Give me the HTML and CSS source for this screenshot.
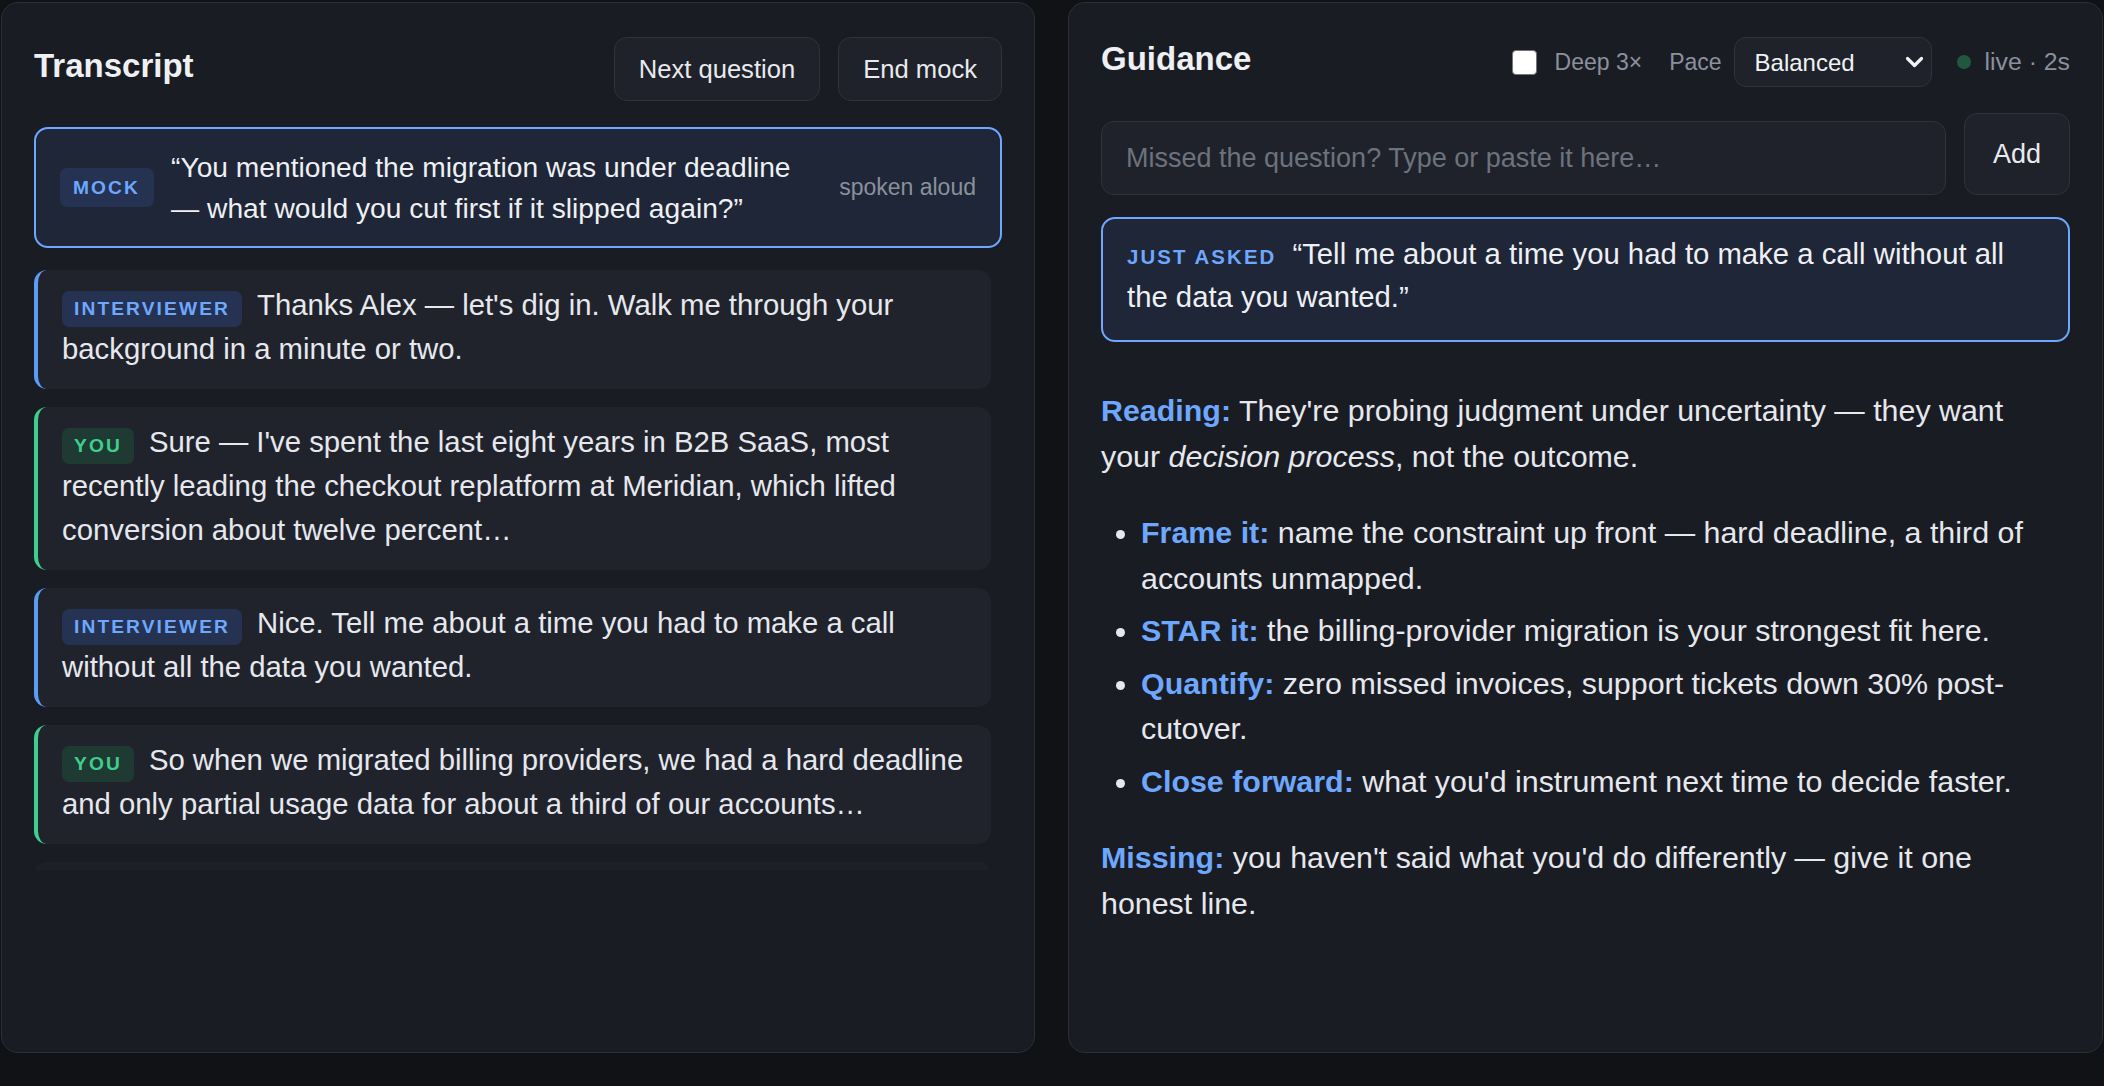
FILE: index.html
```html
<!DOCTYPE html>
<html lang="en">
<head>
    <meta charset="UTF-8">
    <meta name="viewport" content="width=device-width, initial-scale=1.0">
    <title>Mock Interview Copilot</title>
    <link rel="stylesheet" href="styles.css">
</head>
<body>
    <div class="app">
        <!-- Left: live transcript -->
        <section class="panel">
            <header class="panel-head">
                <h2>Transcript</h2>
                <div class="actions">
                    <button class="btn">Next question</button>
                    <button class="btn">End mock</button>
                </div>
            </header>

            <div class="mock-card">
                <span class="tag tag-mock">MOCK</span>
                <p class="mock-text">“You mentioned the migration was under deadline — what would you cut first if it slipped again?”</p>
                <span class="mock-note">spoken aloud</span>
            </div>

            <div class="turns">
                <div class="turn interviewer"><span class="tag">INTERVIEWER</span>Thanks Alex — let's dig in. Walk me through your background in a minute or two.</div>
                <div class="turn you"><span class="tag">YOU</span>Sure — I've spent the last eight years in B2B SaaS, most recently leading the checkout replatform at Meridian, which lifted conversion about twelve percent…</div>
                <div class="turn interviewer"><span class="tag">INTERVIEWER</span>Nice. Tell me about a time you had to make a call without all the data you wanted.</div>
                <div class="turn you"><span class="tag">YOU</span>So when we migrated billing providers, we had a hard deadline and only partial usage data for about a third of our accounts…</div>
                <div class="turn pending"></div>
            </div>
        </section>

        <!-- Right: guidance -->
        <section class="panel">
            <header class="panel-head">
                <h2>Guidance</h2>
                <div class="controls">
                    <label class="check"><input type="checkbox">Deep 3×</label>
                    <label class="pace">Pace
                        <span class="select-wrap">
                            <select>
                                <option>Balanced</option>
                                <option>Fast</option>
                                <option>Thorough</option>
                            </select>
                            <svg class="chevron" width="19" height="12" viewBox="0 0 19 12"><path d="M2.5 2.5 L9.5 9.5 L16.5 2.5" fill="none" stroke="#f0f2f5" stroke-width="3.2" stroke-linecap="round" stroke-linejoin="round"/></svg>
                        </span>
                    </label>
                    <span class="status"><span class="dot"></span>live · 2s</span>
                </div>
            </header>

            <div class="ask-row">
                <input type="text" placeholder="Missed the question? Type or paste it here…">
                <button class="btn btn-add">Add</button>
            </div>

            <div class="asked-card">
                <span class="asked-label">JUST ASKED</span>“Tell me about a time you had to make a call without all the data you wanted.”
            </div>

            <div class="advice">
                <p><strong>Reading:</strong> They're probing judgment under uncertainty — they want your <em>decision process</em>, not the outcome.</p>
                <ul>
                    <li><strong>Frame it:</strong> name the constraint up front — hard deadline, a third of accounts unmapped.</li>
                    <li><strong>STAR it:</strong> the billing-provider migration is your strongest fit here.</li>
                    <li><strong>Quantify:</strong> zero missed invoices, support tickets down 30% post-cutover.</li>
                    <li><strong>Close forward:</strong> what you'd instrument next time to decide faster.</li>
                </ul>
                <p><strong>Missing:</strong> you haven't said what you'd do differently — give it one honest line.</p>
            </div>
        </section>
    </div>
</body>
</html>
```

FILE: styles.css
```css
body {
    margin: 0;
    background-color: #101216;
    color: #e6e8ee;
    font-family: "Liberation Sans", Arial, sans-serif;
}

.app {
    display: grid;
    grid-template-columns: 1034px 1035px;
    gap: 33px;
    padding: 2px 0 0 1px;
}

.panel {
    box-sizing: border-box;
    height: 1051px;
    background-color: #1a1c23;
    border: 1px solid #2c2f38;
    border-radius: 17px;
    padding: 34px 32px 32px;
}

.panel-head {
    display: flex;
    align-items: center;
    justify-content: space-between;
    margin-bottom: 26px;
}

.panel-head h2 {
    margin: 0 0 6px;
    font-size: 33px;
    font-weight: 700;
    color: #eef0f4;
}

.actions {
    display: flex;
    gap: 18px;
}

.btn {
    font-family: inherit;
    font-size: 25.6px;
    color: #e8eaef;
    background-color: #1f222a;
    border: 1px solid #2e323c;
    border-radius: 13px;
    height: 64px;
    padding: 0 24px;
}

/* tags */
.tag {
    display: inline-block;
    font-size: 19.2px;
    line-height: 22px;
    font-weight: 700;
    letter-spacing: 2.1px;
    padding: 7px 12px;
    border-radius: 7px;
    margin-right: 15px;
    color: #6ea8fe;
    background-color: #253251;
}

.mock-card {
    display: flex;
    align-items: center;
    gap: 17px;
    background-color: #1e2637;
    border: 2px solid #6ea8fe;
    border-radius: 14px;
    padding: 18px 24px;
    margin-bottom: 22px;
}

.tag-mock {
    padding: 8.5px 14px 8.5px 13px;
    margin-right: 0;
    flex-shrink: 0;
}

.mock-text {
    margin: 0;
    width: 640px;
    font-size: 28.2px;
    line-height: 40.7px;
    color: #eef0f4;
}

.mock-note {
    margin-left: auto;
    font-size: 23px;
    color: #8a919d;
}

.turns {
    display: flex;
    flex-direction: column;
    gap: 18px;
    height: 600px;
    overflow: hidden;
    padding-right: 11px;
}

.turn {
    flex-shrink: 0;
    background-color: #20232b;
    border-left: 4px solid #5b9cf5;
    border-radius: 13px;
    padding: 13px 16px 18px 24px;
    font-size: 29.3px;
    line-height: 44px;
    color: #e6e8ee;
}

.turn.you {
    border-left-color: #3ecf8e;
}

.turn.you .tag {
    color: #3ecf8e;
    background-color: #1e3a33;
}

.turn.pending {
    min-height: 88px;
    border-left-color: transparent;
    background-color: #1d2028;
}

/* guidance controls */
.controls {
    display: flex;
    align-items: center;
    font-size: 23px;
    color: #8a919d;
}

.check {
    display: flex;
    align-items: center;
    gap: 18px;
    margin-right: 27px;
}

.check input {
    appearance: none;
    -webkit-appearance: none;
    margin: 0;
    width: 25px;
    height: 25px;
    background-color: #ffffff;
    border: 1.5px solid #767676;
    border-radius: 4px;
}

.pace {
    display: flex;
    align-items: center;
    gap: 12px;
    margin-right: 25px;
}

.select-wrap {
    position: relative;
    display: block;
}

.select-wrap select {
    appearance: none;
    -webkit-appearance: none;
    width: 198px;
    height: 50px;
    padding: 0 20px;
    font-family: inherit;
    font-size: 24px;
    color: #f0f2f5;
    background-color: #1f222a;
    border: 1px solid #2e323c;
    border-radius: 12px;
}

.chevron {
    position: absolute;
    right: 8px;
    top: 19px;
    pointer-events: none;
}

.status {
    display: flex;
    align-items: center;
    gap: 14px;
    font-size: 24.8px;
}

.dot {
    width: 14px;
    height: 14px;
    border-radius: 50%;
    background-color: #22573f;
}

.ask-row {
    display: flex;
    align-items: flex-end;
    gap: 18px;
    margin-bottom: 22px;
}

.ask-row input {
    flex: 1;
    box-sizing: border-box;
    height: 74px;
    padding: 0 24px;
    font-family: inherit;
    font-size: 27px;
    color: #e6e8ee;
    background-color: #1f222a;
    border: 1px solid #2e323c;
    border-radius: 13px;
}

.ask-row input::placeholder {
    color: #6c727e;
}

.btn-add {
    height: 82px;
    font-size: 27px;
    padding: 0 28px;
}

.asked-card {
    background-color: #1e2637;
    border: 2px solid #6ea8fe;
    border-radius: 14px;
    padding: 15px 24px 23px;
    font-size: 29.3px;
    line-height: 40px;
    color: #eef0f4;
}

.asked-label {
    font-size: 20.4px;
    font-weight: 700;
    letter-spacing: 2.1px;
    color: #6ea8fe;
    margin-right: 16px;
}

.advice {
    padding-top: 16px;
    padding-right: 24px;
    font-size: 30.4px;
    line-height: 45.6px;
    color: #e6e8ee;
}

.advice p {
    margin: 30.4px 0;
}

.advice ul {
    margin: 30.4px 0;
    padding-left: 40px;
}

.advice li {
    margin-bottom: 7px;
}

.advice strong {
    color: #6ea8fe;
}
```
